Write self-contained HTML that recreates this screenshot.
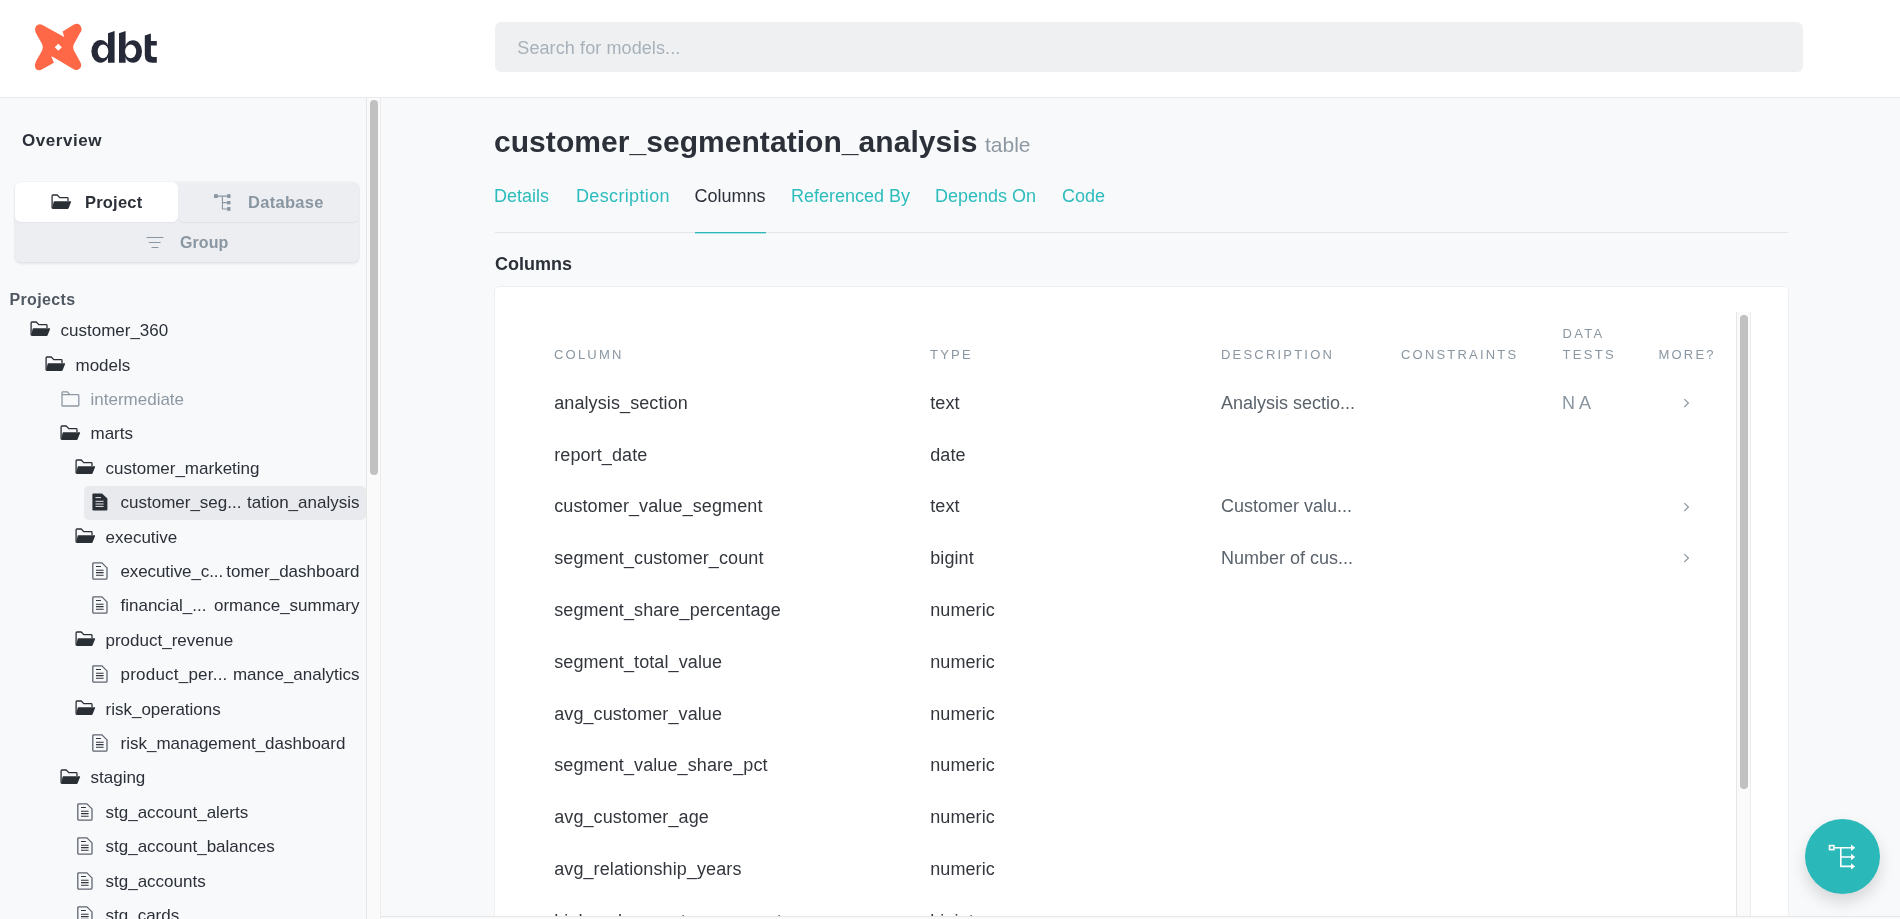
<!DOCTYPE html>
<html><head><meta charset="utf-8">
<style>
*{box-sizing:border-box;margin:0;padding:0}
html,body{width:1900px;height:919px;overflow:hidden;background:#f8f9fb;font-family:"Liberation Sans",sans-serif;color:#2c3038}
.t{position:absolute;white-space:nowrap;-webkit-font-smoothing:antialiased}
.ic{position:absolute;overflow:visible}
.box{position:absolute}
#hdr{position:absolute;left:0;top:0;width:1900px;height:98px;background:#fff;border-bottom:1px solid #e8eaed}
#search{position:absolute;left:495px;top:22px;width:1308px;height:50px;background:#eff0f2;border-radius:6px}
#side{position:absolute;left:0;top:98px;width:366px;height:821px;background:#f8f9fb}
#strack{position:absolute;left:366px;top:98px;width:15px;height:821px;background:#fafafa;border-left:1px solid #e6e6e6;border-right:1px solid #ececec}
#sthumb{position:absolute;left:370px;top:100px;width:8px;height:375px;background:#c1c1c1;border-radius:4px}
#mainborder{position:absolute;left:380px;top:98px;width:1px;height:821px;background:#ececec}
#card{position:absolute;left:494px;top:286px;width:1295px;height:640px;background:#fff;border:1px solid #eeeff1;border-radius:5px}
#itrack{position:absolute;left:1736px;top:312px;width:15px;height:610px;background:#fafafa;border-left:1px solid #e6e6e6;border-right:1px solid #ececec}
#ithumb{position:absolute;left:1740px;top:315px;width:8px;height:474px;background:#c1c1c1;border-radius:4px}
#botclip{position:absolute;left:381px;top:916px;width:1519px;height:3px;background:#fafafa;border-top:1px solid #e6e6e6}
#hscroll{display:none}
#fab{position:absolute;left:1805px;top:819px;width:75px;height:75px;border-radius:50%;background:#2bb8b9;box-shadow:0 8px 16px rgba(0,0,0,0.14)}
</style></head><body><div id="root" style="position:absolute;left:0;top:0;width:1900px;height:919px;will-change:transform">
<div id="hdr"></div>
<svg class="ic" style="left:20px;top:20px" width="150" height="60" viewBox="0 0 1900 760"><path fill="#fe6847" d="M560 215 L540 145 L690 55 Q760 30 780 110 Q785 140 760 165 L680 310 Q665 345 680 380 L760 525 Q790 580 760 610 Q720 650 680 625 L430 475 L395 460 L430 540 L270 630 Q220 650 195 610 Q180 570 200 530 L280 385 Q300 345 280 305 L200 160 Q180 110 205 75 Q240 40 290 65 ZM485 300 L530 345 L485 390 L440 345 Z" fill-rule="evenodd"/></svg>
<svg class="ic" style="left:85px;top:25px" width="80" height="45" viewBox="0 0 80 45"><g fill="#262a38"><ellipse cx="15.5" cy="26.3" rx="9.1" ry="11.4"/><path d="M23 8.3L29.6 6V37.7H23Z"/><path d="M34 8.3L40.6 6V37.7H34Z"/><ellipse cx="48" cy="26.45" rx="9" ry="11.25"/><path d="M59.8 10.5L65.9 8.6V15.9H71.8V20.6H65.9V29.6Q65.9 32.1 68.4 32.1H71.8V37.7H67.3Q59.8 37.7 59.8 30.2Z"/></g><g fill="#fff"><ellipse cx="18" cy="26.45" rx="5.3" ry="6.85"/><ellipse cx="45.65" cy="26.45" rx="5.55" ry="6.85"/></g></svg>
<div id="search"></div>
<div class="t" style="left:517.3px;top:38.96px;font-size:18px;line-height:18px;color:#a7b1b9;font-weight:400;letter-spacing:0.1px;">Search for models...</div>
<div id="side"></div>
<div id="strack"></div><div id="sthumb"></div>
<div class="t" style="left:22px;top:132.11px;font-size:17px;line-height:17px;color:#2c3038;font-weight:700;letter-spacing:0.55px;">Overview</div>
<div class="box" style="left:15px;top:182px;width:344px;height:80px;background:#eceef1;border-radius:6px;box-shadow:0 0 0 1px rgba(0,0,0,0.025),0 2px 3px rgba(0,0,0,0.08)"></div>
<div class="box" style="left:178px;top:182px;width:181px;height:40px;border-radius:6px;box-shadow:0 1px 1px rgba(0,0,0,0.06)"></div>
<div class="box" style="left:15px;top:182px;width:163px;height:40px;background:#fff;border-radius:6px;box-shadow:0 1px 1px rgba(0,0,0,0.04)"></div>
<svg class="ic" style="left:51px;top:194px" width="21" height="16" viewBox="0 0 21 16"><path d="M1.1 14.2V1.9Q1.1 1 2 1H6.2L8.8 3.6H16.2Q17 3.6 17 4.4V7" fill="none" stroke="#2a2e35" stroke-width="1.3"/><path d="M3.2 7.2H19.6Q20.4 7.2 20.1 8L17.6 14.3Q17.3 15 16.6 15H1.6Q0.9 15 1.2 14.2L2.6 7.9Q2.8 7.2 3.2 7.2Z" fill="#2a2e35"/></svg>
<div class="t" style="left:85px;top:194.13px;font-size:16.5px;line-height:16.5px;color:#2c3038;font-weight:700;letter-spacing:0.2px;">Project</div>
<svg class="ic" style="left:213px;top:193px" width="19" height="19" viewBox="0 0 19 19"><g fill="#8a96a1"><rect x="1" y="1.2" width="3.8" height="3.8"/><rect x="14.1" y="1.2" width="3.4" height="3.8"/><rect x="14.1" y="8" width="3.4" height="3.4"/><rect x="14.1" y="14" width="3.4" height="3.8"/></g><path d="M4.5 3.1H14.3M9.4 3.1V16H14.3M9.4 9.6H14.3" fill="none" stroke="#8a96a1" stroke-width="1.1"/></svg>
<div class="t" style="left:248px;top:194.23px;font-size:16.5px;line-height:16.5px;color:#8a96a1;font-weight:700;letter-spacing:0.3px;">Database</div>
<svg class="ic" style="left:146px;top:235px" width="18" height="15" viewBox="0 0 18 15"><path d="M1 2.5H17M3.3 7.5H14.1M6 12.5H12" stroke="#8a96a1" stroke-width="1.2" stroke-linecap="round"/></svg>
<div class="t" style="left:180px;top:234.96px;font-size:16px;line-height:16px;color:#8a96a1;font-weight:700;letter-spacing:0.1px;">Group</div>
<div class="t" style="left:9.5px;top:292.06px;font-size:16px;line-height:16px;color:#505862;font-weight:700;letter-spacing:0.35px;">Projects</div>
<svg class="ic" style="left:29.7px;top:321px" width="21" height="16" viewBox="0 0 21 16"><path d="M1.1 14.2V1.9Q1.1 1 2 1H6.2L8.8 3.6H16.2Q17 3.6 17 4.4V7" fill="none" stroke="#2a2e35" stroke-width="1.3"/><path d="M3.2 7.2H19.6Q20.4 7.2 20.1 8L17.6 14.3Q17.3 15 16.6 15H1.6Q0.9 15 1.2 14.2L2.6 7.9Q2.8 7.2 3.2 7.2Z" fill="#2a2e35"/></svg>
<div class="t" style="left:60.5px;top:322.11px;font-size:17px;line-height:17px;color:#2c3038;font-weight:400;letter-spacing:0px;">customer_360</div>
<svg class="ic" style="left:44.7px;top:356px" width="21" height="16" viewBox="0 0 21 16"><path d="M1.1 14.2V1.9Q1.1 1 2 1H6.2L8.8 3.6H16.2Q17 3.6 17 4.4V7" fill="none" stroke="#2a2e35" stroke-width="1.3"/><path d="M3.2 7.2H19.6Q20.4 7.2 20.1 8L17.6 14.3Q17.3 15 16.6 15H1.6Q0.9 15 1.2 14.2L2.6 7.9Q2.8 7.2 3.2 7.2Z" fill="#2a2e35"/></svg>
<div class="t" style="left:75.5px;top:356.51px;font-size:17px;line-height:17px;color:#2c3038;font-weight:400;letter-spacing:0px;">models</div>
<svg class="ic" style="left:60.5px;top:391px" width="20" height="16" viewBox="0 0 20 16"><path d="M1 14.5V1.6Q1 0.9 1.7 0.9H6.5L8.6 3.6H17Q17.8 3.6 17.8 4.4V14.3Q17.8 15 17.1 15H1.7Q1 15 1 14.5Z M1 3.6H8.6" fill="none" stroke="#8d98a3" stroke-width="1.3"/></svg>
<div class="t" style="left:90.5px;top:390.91px;font-size:17px;line-height:17px;color:#8d98a3;font-weight:400;letter-spacing:0px;">intermediate</div>
<svg class="ic" style="left:59.7px;top:425px" width="21" height="16" viewBox="0 0 21 16"><path d="M1.1 14.2V1.9Q1.1 1 2 1H6.2L8.8 3.6H16.2Q17 3.6 17 4.4V7" fill="none" stroke="#2a2e35" stroke-width="1.3"/><path d="M3.2 7.2H19.6Q20.4 7.2 20.1 8L17.6 14.3Q17.3 15 16.6 15H1.6Q0.9 15 1.2 14.2L2.6 7.9Q2.8 7.2 3.2 7.2Z" fill="#2a2e35"/></svg>
<div class="t" style="left:90.5px;top:425.31px;font-size:17px;line-height:17px;color:#2c3038;font-weight:400;letter-spacing:0px;">marts</div>
<svg class="ic" style="left:74.7px;top:459px" width="21" height="16" viewBox="0 0 21 16"><path d="M1.1 14.2V1.9Q1.1 1 2 1H6.2L8.8 3.6H16.2Q17 3.6 17 4.4V7" fill="none" stroke="#2a2e35" stroke-width="1.3"/><path d="M3.2 7.2H19.6Q20.4 7.2 20.1 8L17.6 14.3Q17.3 15 16.6 15H1.6Q0.9 15 1.2 14.2L2.6 7.9Q2.8 7.2 3.2 7.2Z" fill="#2a2e35"/></svg>
<div class="t" style="left:105.5px;top:459.71px;font-size:17px;line-height:17px;color:#2c3038;font-weight:400;letter-spacing:0px;">customer_marketing</div>
<div class="box" style="left:84px;top:486.0px;width:282px;height:34px;background:#e8eaed;border-radius:5px"></div>
<svg class="ic" style="left:92px;top:493px" width="16" height="18" viewBox="0 0 16 18"><path d="M1.3 0.4H10L15.4 5.6V16.6Q15.4 17.6 14.4 17.6H1.3Q0.4 17.6 0.4 16.6V1.4Q0.4 0.4 1.3 0.4Z" fill="#2a2e35"/><path d="M3.5 4.6H8.9M3.5 8.3H11.6M3.5 11H11.6M3.5 13.4H11.6" stroke="#e8eaed" stroke-width="1"/></svg>
<div class="t" style="left:120.5px;top:494.11px;font-size:17px;line-height:17px;color:#2c3038;font-weight:400;letter-spacing:0px;">customer_seg...</div>
<div class="t" style="left:0px;top:494.11px;font-size:17px;line-height:17px;color:#2c3038;font-weight:400;letter-spacing:0px;left:auto;right:1540.5px">tation_analysis</div>
<svg class="ic" style="left:74.7px;top:528px" width="21" height="16" viewBox="0 0 21 16"><path d="M1.1 14.2V1.9Q1.1 1 2 1H6.2L8.8 3.6H16.2Q17 3.6 17 4.4V7" fill="none" stroke="#2a2e35" stroke-width="1.3"/><path d="M3.2 7.2H19.6Q20.4 7.2 20.1 8L17.6 14.3Q17.3 15 16.6 15H1.6Q0.9 15 1.2 14.2L2.6 7.9Q2.8 7.2 3.2 7.2Z" fill="#2a2e35"/></svg>
<div class="t" style="left:105.5px;top:528.51px;font-size:17px;line-height:17px;color:#2c3038;font-weight:400;letter-spacing:0px;">executive</div>
<svg class="ic" style="left:92px;top:562px" width="16" height="18" viewBox="0 0 16 18"><path d="M1.9 0.8H9.9L15 5.9V16Q15 17.2 13.9 17.2H1.9Q0.8 17.2 0.8 16V1.9Q0.8 0.8 1.9 0.8Z" fill="none" stroke="#5f6670" stroke-width="1.3"/><path d="M4 4.5H8.9M4 8.3H11.6M4 10.6H11.6M4 13.2H11.6" stroke="#2f333b" stroke-width="1.1"/></svg>
<div class="t" style="left:120.5px;top:562.91px;font-size:17px;line-height:17px;color:#2c3038;font-weight:400;letter-spacing:-0.1px;">executive_c...</div>
<div class="t" style="left:0px;top:562.91px;font-size:17px;line-height:17px;color:#2c3038;font-weight:400;letter-spacing:0px;left:auto;right:1540.5px">tomer_dashboard</div>
<svg class="ic" style="left:92px;top:596px" width="16" height="18" viewBox="0 0 16 18"><path d="M1.9 0.8H9.9L15 5.9V16Q15 17.2 13.9 17.2H1.9Q0.8 17.2 0.8 16V1.9Q0.8 0.8 1.9 0.8Z" fill="none" stroke="#5f6670" stroke-width="1.3"/><path d="M4 4.5H8.9M4 8.3H11.6M4 10.6H11.6M4 13.2H11.6" stroke="#2f333b" stroke-width="1.1"/></svg>
<div class="t" style="left:120.5px;top:597.31px;font-size:17px;line-height:17px;color:#2c3038;font-weight:400;letter-spacing:0px;">financial_...</div>
<div class="t" style="left:0px;top:597.31px;font-size:17px;line-height:17px;color:#2c3038;font-weight:400;letter-spacing:0px;left:auto;right:1540.5px">ormance_summary</div>
<svg class="ic" style="left:74.7px;top:631px" width="21" height="16" viewBox="0 0 21 16"><path d="M1.1 14.2V1.9Q1.1 1 2 1H6.2L8.8 3.6H16.2Q17 3.6 17 4.4V7" fill="none" stroke="#2a2e35" stroke-width="1.3"/><path d="M3.2 7.2H19.6Q20.4 7.2 20.1 8L17.6 14.3Q17.3 15 16.6 15H1.6Q0.9 15 1.2 14.2L2.6 7.9Q2.8 7.2 3.2 7.2Z" fill="#2a2e35"/></svg>
<div class="t" style="left:105.5px;top:631.71px;font-size:17px;line-height:17px;color:#2c3038;font-weight:400;letter-spacing:0px;">product_revenue</div>
<svg class="ic" style="left:92px;top:665px" width="16" height="18" viewBox="0 0 16 18"><path d="M1.9 0.8H9.9L15 5.9V16Q15 17.2 13.9 17.2H1.9Q0.8 17.2 0.8 16V1.9Q0.8 0.8 1.9 0.8Z" fill="none" stroke="#5f6670" stroke-width="1.3"/><path d="M4 4.5H8.9M4 8.3H11.6M4 10.6H11.6M4 13.2H11.6" stroke="#2f333b" stroke-width="1.1"/></svg>
<div class="t" style="left:120.5px;top:666.11px;font-size:17px;line-height:17px;color:#2c3038;font-weight:400;letter-spacing:0.22px;">product_per...</div>
<div class="t" style="left:0px;top:666.11px;font-size:17px;line-height:17px;color:#2c3038;font-weight:400;letter-spacing:0px;left:auto;right:1540.5px">mance_analytics</div>
<svg class="ic" style="left:74.7px;top:700px" width="21" height="16" viewBox="0 0 21 16"><path d="M1.1 14.2V1.9Q1.1 1 2 1H6.2L8.8 3.6H16.2Q17 3.6 17 4.4V7" fill="none" stroke="#2a2e35" stroke-width="1.3"/><path d="M3.2 7.2H19.6Q20.4 7.2 20.1 8L17.6 14.3Q17.3 15 16.6 15H1.6Q0.9 15 1.2 14.2L2.6 7.9Q2.8 7.2 3.2 7.2Z" fill="#2a2e35"/></svg>
<div class="t" style="left:105.5px;top:700.51px;font-size:17px;line-height:17px;color:#2c3038;font-weight:400;letter-spacing:0px;">risk_operations</div>
<svg class="ic" style="left:92px;top:734px" width="16" height="18" viewBox="0 0 16 18"><path d="M1.9 0.8H9.9L15 5.9V16Q15 17.2 13.9 17.2H1.9Q0.8 17.2 0.8 16V1.9Q0.8 0.8 1.9 0.8Z" fill="none" stroke="#5f6670" stroke-width="1.3"/><path d="M4 4.5H8.9M4 8.3H11.6M4 10.6H11.6M4 13.2H11.6" stroke="#2f333b" stroke-width="1.1"/></svg>
<div class="t" style="left:120.5px;top:734.91px;font-size:17px;line-height:17px;color:#2c3038;font-weight:400;letter-spacing:0px;">risk_management_dashboard</div>
<svg class="ic" style="left:59.7px;top:769px" width="21" height="16" viewBox="0 0 21 16"><path d="M1.1 14.2V1.9Q1.1 1 2 1H6.2L8.8 3.6H16.2Q17 3.6 17 4.4V7" fill="none" stroke="#2a2e35" stroke-width="1.3"/><path d="M3.2 7.2H19.6Q20.4 7.2 20.1 8L17.6 14.3Q17.3 15 16.6 15H1.6Q0.9 15 1.2 14.2L2.6 7.9Q2.8 7.2 3.2 7.2Z" fill="#2a2e35"/></svg>
<div class="t" style="left:90.5px;top:769.31px;font-size:17px;line-height:17px;color:#2c3038;font-weight:400;letter-spacing:0px;">staging</div>
<svg class="ic" style="left:77px;top:803px" width="16" height="18" viewBox="0 0 16 18"><path d="M1.9 0.8H9.9L15 5.9V16Q15 17.2 13.9 17.2H1.9Q0.8 17.2 0.8 16V1.9Q0.8 0.8 1.9 0.8Z" fill="none" stroke="#5f6670" stroke-width="1.3"/><path d="M4 4.5H8.9M4 8.3H11.6M4 10.6H11.6M4 13.2H11.6" stroke="#2f333b" stroke-width="1.1"/></svg>
<div class="t" style="left:105.5px;top:803.71px;font-size:17px;line-height:17px;color:#2c3038;font-weight:400;letter-spacing:0px;">stg_account_alerts</div>
<svg class="ic" style="left:77px;top:837px" width="16" height="18" viewBox="0 0 16 18"><path d="M1.9 0.8H9.9L15 5.9V16Q15 17.2 13.9 17.2H1.9Q0.8 17.2 0.8 16V1.9Q0.8 0.8 1.9 0.8Z" fill="none" stroke="#5f6670" stroke-width="1.3"/><path d="M4 4.5H8.9M4 8.3H11.6M4 10.6H11.6M4 13.2H11.6" stroke="#2f333b" stroke-width="1.1"/></svg>
<div class="t" style="left:105.5px;top:838.11px;font-size:17px;line-height:17px;color:#2c3038;font-weight:400;letter-spacing:0px;">stg_account_balances</div>
<svg class="ic" style="left:77px;top:872px" width="16" height="18" viewBox="0 0 16 18"><path d="M1.9 0.8H9.9L15 5.9V16Q15 17.2 13.9 17.2H1.9Q0.8 17.2 0.8 16V1.9Q0.8 0.8 1.9 0.8Z" fill="none" stroke="#5f6670" stroke-width="1.3"/><path d="M4 4.5H8.9M4 8.3H11.6M4 10.6H11.6M4 13.2H11.6" stroke="#2f333b" stroke-width="1.1"/></svg>
<div class="t" style="left:105.5px;top:872.51px;font-size:17px;line-height:17px;color:#2c3038;font-weight:400;letter-spacing:0px;">stg_accounts</div>
<svg class="ic" style="left:77px;top:906px" width="16" height="18" viewBox="0 0 16 18"><path d="M1.9 0.8H9.9L15 5.9V16Q15 17.2 13.9 17.2H1.9Q0.8 17.2 0.8 16V1.9Q0.8 0.8 1.9 0.8Z" fill="none" stroke="#5f6670" stroke-width="1.3"/><path d="M4 4.5H8.9M4 8.3H11.6M4 10.6H11.6M4 13.2H11.6" stroke="#2f333b" stroke-width="1.1"/></svg>
<div class="t" style="left:105.5px;top:906.91px;font-size:17px;line-height:17px;color:#2c3038;font-weight:400;letter-spacing:0px;">stg_cards</div>
<div id="mainborder"></div>
<div class="t" style="left:494px;top:126.60px;font-size:30px;line-height:30px;color:#2c3038;font-weight:700;letter-spacing:0.05px;">customer_segmentation_analysis</div>
<div class="t" style="left:985px;top:134.22px;font-size:21px;line-height:21px;color:#8e98a1;font-weight:400;letter-spacing:0px;">table</div>
<div class="t" style="left:494px;top:187.36px;font-size:18px;line-height:18px;color:#2dbcbc;font-weight:400;letter-spacing:0px;">Details</div>
<div class="t" style="left:576px;top:187.36px;font-size:18px;line-height:18px;color:#2dbcbc;font-weight:400;letter-spacing:0.35px;">Description</div>
<div class="t" style="left:694.5px;top:187.36px;font-size:18px;line-height:18px;color:#2c3038;font-weight:400;letter-spacing:0px;">Columns</div>
<div class="t" style="left:791px;top:187.36px;font-size:18px;line-height:18px;color:#2dbcbc;font-weight:400;letter-spacing:0px;">Referenced By</div>
<div class="t" style="left:935px;top:187.36px;font-size:18px;line-height:18px;color:#2dbcbc;font-weight:400;letter-spacing:0px;">Depends On</div>
<div class="t" style="left:1062px;top:187.36px;font-size:18px;line-height:18px;color:#2dbcbc;font-weight:400;letter-spacing:0px;">Code</div>
<div class="box" style="left:495px;top:232px;width:1293px;height:1px;background:#e3e5e8"></div>
<div class="box" style="left:695px;top:232px;width:71px;height:1px;background:#2cb8b8;box-shadow:0 1px 0 rgba(44,184,184,0.35)"></div>
<div class="t" style="left:495px;top:255.26px;font-size:18px;line-height:18px;color:#2c3038;font-weight:700;letter-spacing:0px;">Columns</div>
<div id="card"></div>
<div id="itrack"></div><div id="ithumb"></div>
<div class="t" style="left:554px;top:348.20px;font-size:13px;line-height:13px;color:#8a96a1;font-weight:400;letter-spacing:2.2px;">COLUMN</div>
<div class="t" style="left:930px;top:348.20px;font-size:13px;line-height:13px;color:#8a96a1;font-weight:400;letter-spacing:2.2px;">TYPE</div>
<div class="t" style="left:1221px;top:348.20px;font-size:13px;line-height:13px;color:#8a96a1;font-weight:400;letter-spacing:2.2px;">DESCRIPTION</div>
<div class="t" style="left:1401px;top:348.20px;font-size:13px;line-height:13px;color:#8a96a1;font-weight:400;letter-spacing:2.2px;">CONSTRAINTS</div>
<div class="t" style="left:1658.5px;top:348.20px;font-size:13px;line-height:13px;color:#8a96a1;font-weight:400;letter-spacing:2.2px;">MORE?</div>
<div class="t" style="left:1562.5px;top:327.10px;font-size:13px;line-height:13px;color:#8a96a1;font-weight:400;letter-spacing:2.3px;">DATA</div>
<div class="t" style="left:1562.5px;top:348.20px;font-size:13px;line-height:13px;color:#8a96a1;font-weight:400;letter-spacing:2.3px;">TESTS</div>
<div class="t" style="left:554.2px;top:393.76px;font-size:18px;line-height:18px;color:#33373d;font-weight:400;letter-spacing:0.1px;">analysis_section</div>
<div class="t" style="left:930.2px;top:393.76px;font-size:18px;line-height:18px;color:#33373d;font-weight:400;letter-spacing:0.1px;">text</div>
<div class="t" style="left:1221px;top:393.76px;font-size:18px;line-height:18px;color:#5a626b;font-weight:400;letter-spacing:0px;">Analysis sectio...</div>
<div class="t" style="left:1562px;top:393.76px;font-size:18px;line-height:18px;color:#8a96a1;font-weight:400;letter-spacing:0px;">N A</div>
<svg class="ic" style="left:1683px;top:398.0px" width="8" height="11" viewBox="0 0 8 11"><path d="M1.3 1.1L5.4 5L1.3 9.2" fill="none" stroke="#8a96a0" stroke-width="1.2"/></svg>
<div class="t" style="left:554.2px;top:445.56px;font-size:18px;line-height:18px;color:#33373d;font-weight:400;letter-spacing:0.1px;">report_date</div>
<div class="t" style="left:930.2px;top:445.56px;font-size:18px;line-height:18px;color:#33373d;font-weight:400;letter-spacing:0.1px;">date</div>
<div class="t" style="left:554.2px;top:497.36px;font-size:18px;line-height:18px;color:#33373d;font-weight:400;letter-spacing:0.1px;">customer_value_segment</div>
<div class="t" style="left:930.2px;top:497.36px;font-size:18px;line-height:18px;color:#33373d;font-weight:400;letter-spacing:0.1px;">text</div>
<div class="t" style="left:1221px;top:497.36px;font-size:18px;line-height:18px;color:#5a626b;font-weight:400;letter-spacing:0px;">Customer valu...</div>
<svg class="ic" style="left:1683px;top:501.6px" width="8" height="11" viewBox="0 0 8 11"><path d="M1.3 1.1L5.4 5L1.3 9.2" fill="none" stroke="#8a96a0" stroke-width="1.2"/></svg>
<div class="t" style="left:554.2px;top:549.16px;font-size:18px;line-height:18px;color:#33373d;font-weight:400;letter-spacing:0.1px;">segment_customer_count</div>
<div class="t" style="left:930.2px;top:549.16px;font-size:18px;line-height:18px;color:#33373d;font-weight:400;letter-spacing:0.1px;">bigint</div>
<div class="t" style="left:1221px;top:549.16px;font-size:18px;line-height:18px;color:#5a626b;font-weight:400;letter-spacing:0px;">Number of cus...</div>
<svg class="ic" style="left:1683px;top:553.4px" width="8" height="11" viewBox="0 0 8 11"><path d="M1.3 1.1L5.4 5L1.3 9.2" fill="none" stroke="#8a96a0" stroke-width="1.2"/></svg>
<div class="t" style="left:554.2px;top:600.96px;font-size:18px;line-height:18px;color:#33373d;font-weight:400;letter-spacing:0.1px;">segment_share_percentage</div>
<div class="t" style="left:930.2px;top:600.96px;font-size:18px;line-height:18px;color:#33373d;font-weight:400;letter-spacing:0.1px;">numeric</div>
<div class="t" style="left:554.2px;top:652.76px;font-size:18px;line-height:18px;color:#33373d;font-weight:400;letter-spacing:0.1px;">segment_total_value</div>
<div class="t" style="left:930.2px;top:652.76px;font-size:18px;line-height:18px;color:#33373d;font-weight:400;letter-spacing:0.1px;">numeric</div>
<div class="t" style="left:554.2px;top:704.56px;font-size:18px;line-height:18px;color:#33373d;font-weight:400;letter-spacing:0.1px;">avg_customer_value</div>
<div class="t" style="left:930.2px;top:704.56px;font-size:18px;line-height:18px;color:#33373d;font-weight:400;letter-spacing:0.1px;">numeric</div>
<div class="t" style="left:554.2px;top:756.36px;font-size:18px;line-height:18px;color:#33373d;font-weight:400;letter-spacing:0.1px;">segment_value_share_pct</div>
<div class="t" style="left:930.2px;top:756.36px;font-size:18px;line-height:18px;color:#33373d;font-weight:400;letter-spacing:0.1px;">numeric</div>
<div class="t" style="left:554.2px;top:808.16px;font-size:18px;line-height:18px;color:#33373d;font-weight:400;letter-spacing:0.1px;">avg_customer_age</div>
<div class="t" style="left:930.2px;top:808.16px;font-size:18px;line-height:18px;color:#33373d;font-weight:400;letter-spacing:0.1px;">numeric</div>
<div class="t" style="left:554.2px;top:859.96px;font-size:18px;line-height:18px;color:#33373d;font-weight:400;letter-spacing:0.1px;">avg_relationship_years</div>
<div class="t" style="left:930.2px;top:859.96px;font-size:18px;line-height:18px;color:#33373d;font-weight:400;letter-spacing:0.1px;">numeric</div>
<div class="t" style="left:554.2px;top:911.76px;font-size:18px;line-height:18px;color:#33373d;font-weight:400;letter-spacing:0.1px;">high_value_customer_count</div>
<div class="t" style="left:930.2px;top:911.76px;font-size:18px;line-height:18px;color:#33373d;font-weight:400;letter-spacing:0.1px;">bigint</div>
<div id="botclip"></div>
<div id="hscroll"></div>
<div id="fab"></div>
<svg class="ic" style="left:1826px;top:842px" width="32" height="28" viewBox="0 0 32 28"><rect x="3.5" y="3.6" width="4.4" height="4" fill="none" stroke="#fff" stroke-width="1.6"/><path d="M8.3 5.8H27M14.8 5.8V24.4H27M14.8 15H27" fill="none" stroke="#fff" stroke-width="1.6"/><path d="M25 2.6L29.2 5.8L25 9ZM25 11.8L29.2 15L25 18.2ZM25 21.2L29.2 24.4L25 27.6Z" fill="#fff"/></svg>
</div></body></html>
